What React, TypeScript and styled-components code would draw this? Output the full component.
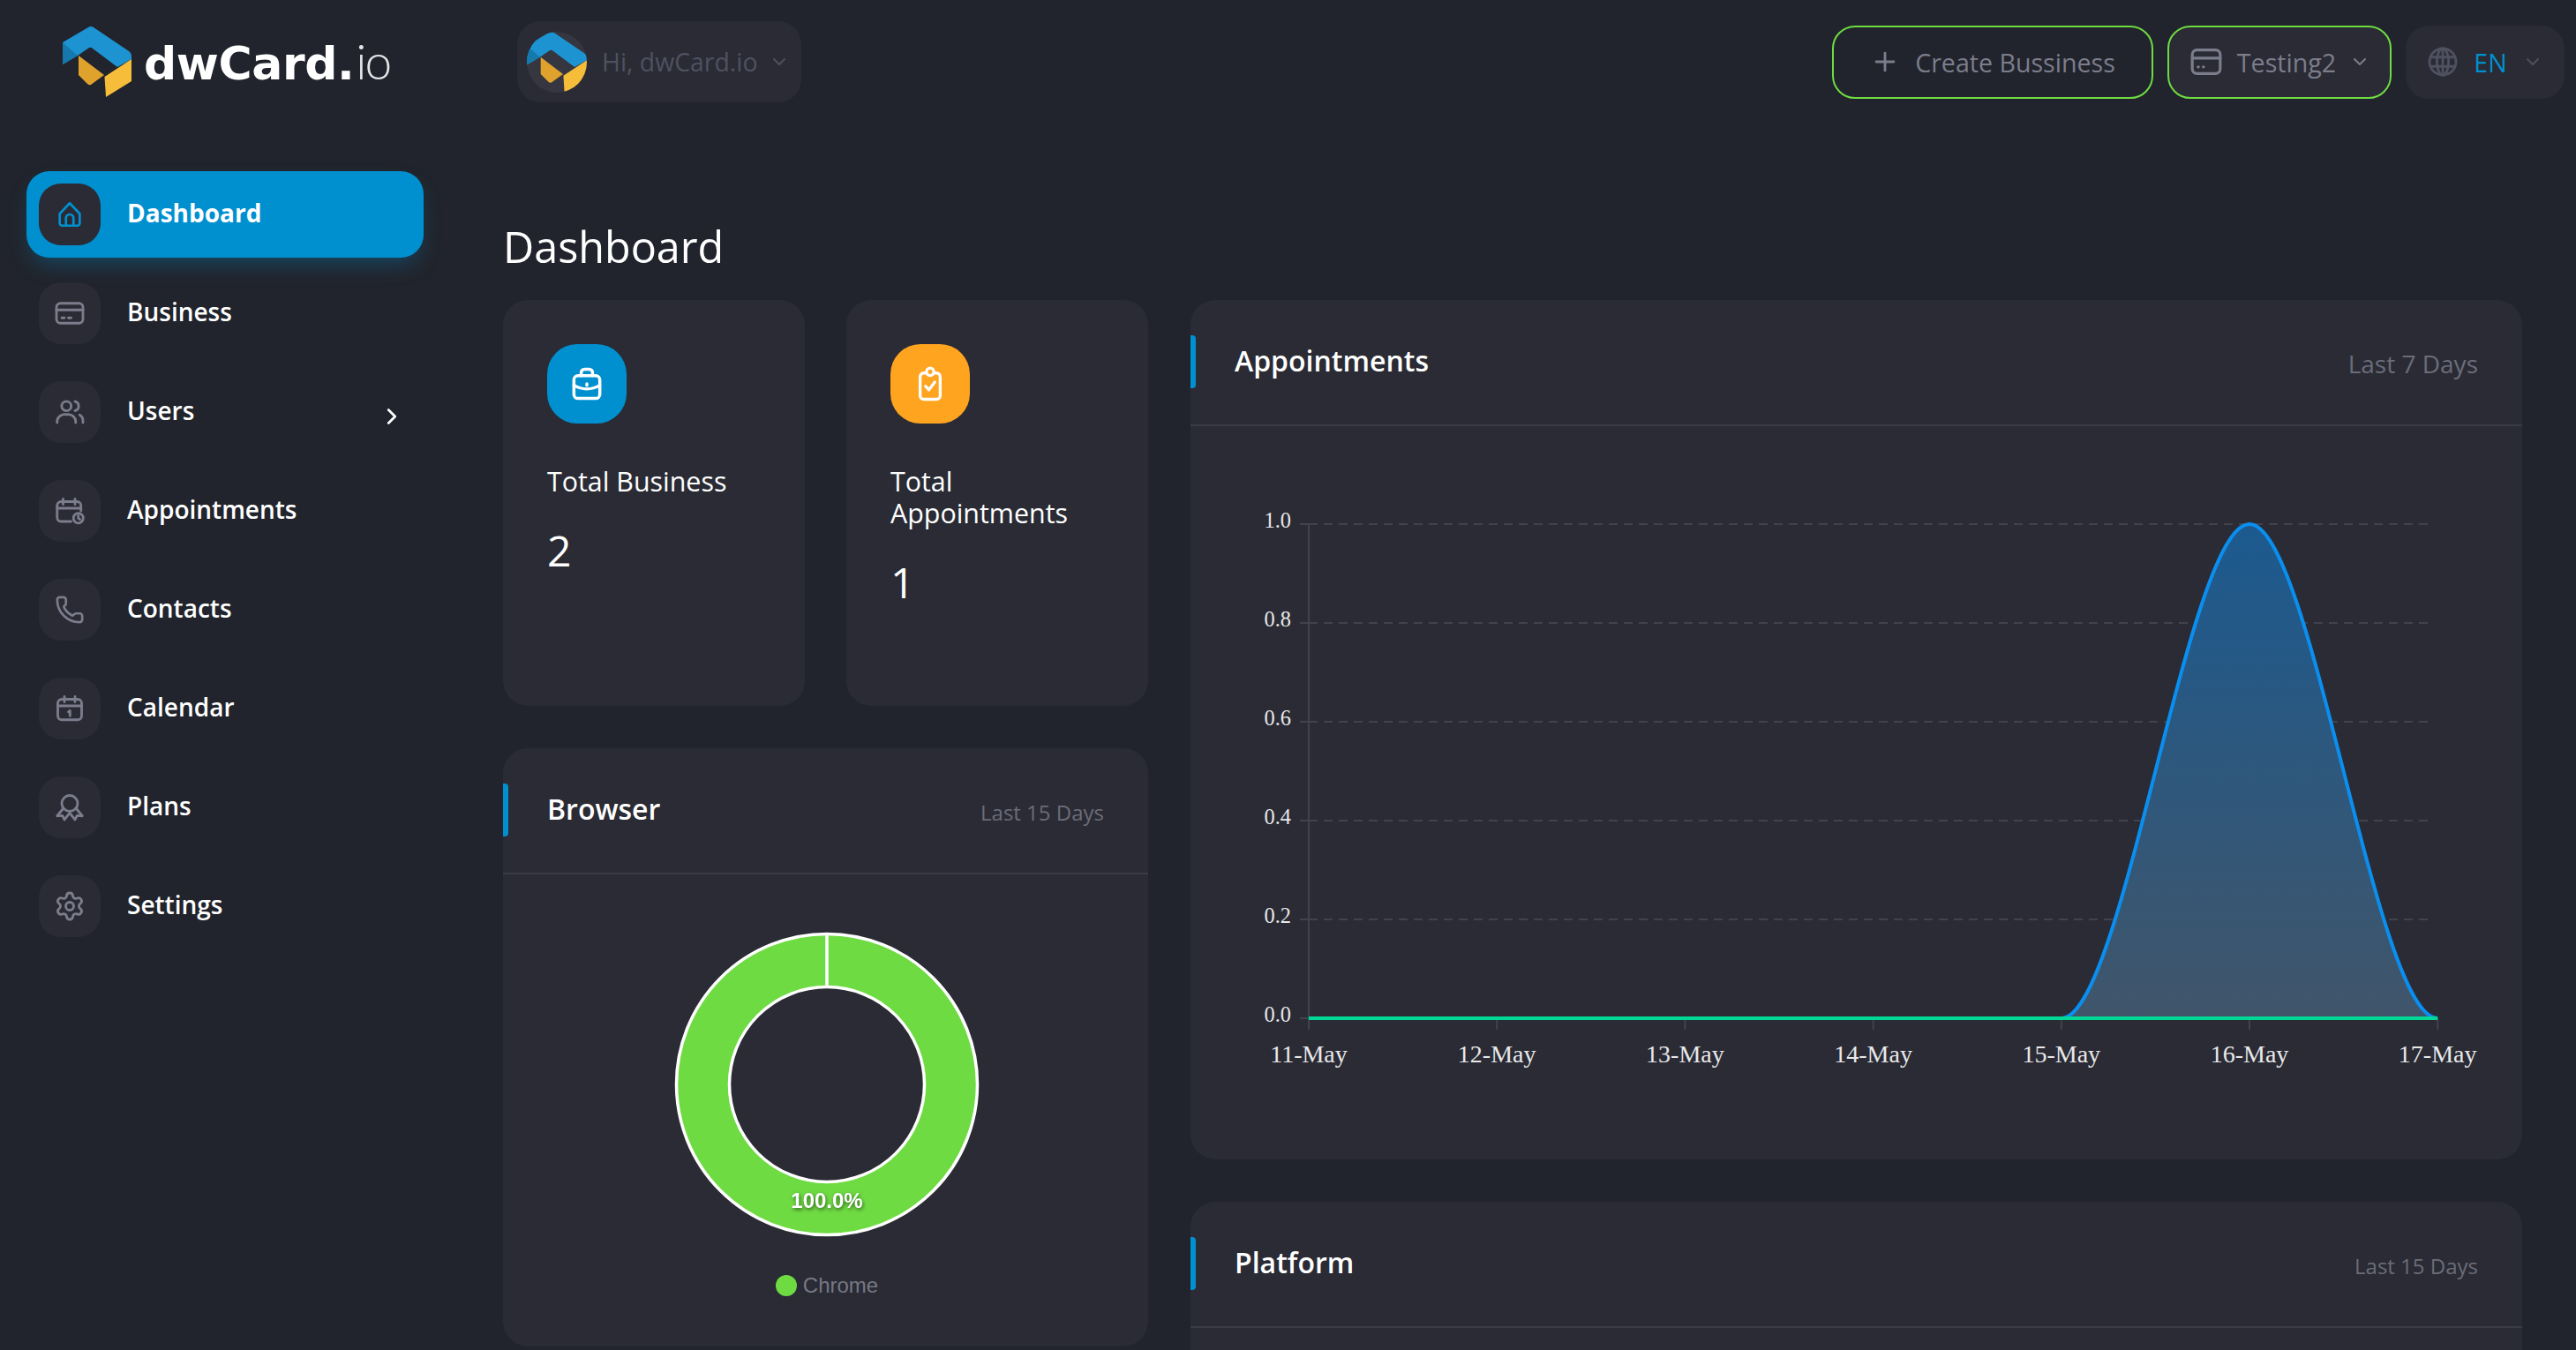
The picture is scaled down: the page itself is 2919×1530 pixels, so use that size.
import React from 'react';
import styled, { createGlobalStyle } from 'styled-components';
import { ChevronDown, ChevronRight, Phone, Plus, Settings } from 'lucide-react';

const GlobalStyle = createGlobalStyle`
    html, body {
        margin: 0;
        height: 100%;
        overflow: hidden;
        background: #21242c;
    }
    body {
        font-family: "Open Sans", "Noto Sans", sans-serif;
        color: #fff;
    }
    * {
        box-sizing: border-box;
    }
`;

const Page = styled.div`
    width: 2919px;
    height: 1530px;
    overflow: hidden;
    background: #21242c;
`;

/* top bar */
const TopBar = styled.header`
    height: 140px;
    display: flex;
    align-items: center;
    padding: 0 13px 0 71px;
`;
const Brand = styled.div`
    width: 515px;
    display: flex;
    align-items: center;
    gap: 14px;
`;
const BrandName = styled.div`
    font-family: "DejaVu Sans", sans-serif;
    font-weight: 700;
    font-size: 52px;
    line-height: 60px;
    letter-spacing: -0.4px;
    color: #fff;
`;
const BrandSuffix = styled.span`
    font-family: "Lato", "Liberation Sans", sans-serif;
    font-weight: 300;
    font-size: 55px;
    letter-spacing: -2px;
    color: #e4e5e8;
    margin-left: 2px;
`;
const ProfilePill = styled.div`
    width: 322px;
    height: 92px;
    border-radius: 26px;
    background: #2a2b34;
    display: flex;
    align-items: center;
    padding-left: 11px;
    gap: 17px;
    color: #4f5160;
    font-size: 28.4px;
`;
const PillChevron = styled.span`
    display: flex;
    margin-left: -5px;
`;
const Avatar = styled.div`
    width: 68px;
    height: 69px;
    border-radius: 50%;
    background: #35363f;
    overflow: hidden;
    flex: none;
`;
const TopActions = styled.div`
    margin-left: auto;
    display: flex;
    align-items: center;
    gap: 16px;
`;
const ActionButton = styled.div<{ $outlined?: boolean; $filled?: boolean; $width: number; $gap?: number }>`
    width: ${(p) => p.$width}px;
    height: 83px;
    border-radius: 26px;
    display: flex;
    align-items: center;
    justify-content: center;
    gap: ${(p) => p.$gap ?? 17}px;
    font-size: 28.6px;
    color: #7c7d8c;
    border: ${(p) => (p.$outlined ? '2.5px solid #6fdb43' : 'none')};
    background: ${(p) => (p.$filled ? '#2a2b34' : 'transparent')};
`;
const LangCode = styled.span`
    color: #0090d0;
`;
const DimSlot = styled.span`
    color: #4f5160;
    display: flex;
`;

/* layout under the bar */
const Content = styled.div`
    display: flex;
    align-items: flex-start;
`;
const Sidebar = styled.nav`
    width: 570px;
    flex: none;
    padding: 54px 0 0 30px;
    display: flex;
    flex-direction: column;
    gap: 14px;
`;
const NavRow = styled.div<{ $active?: boolean }>`
    width: 450px;
    height: 98px;
    display: flex;
    align-items: center;
    gap: 30px;
    padding-left: 14px;
    border-radius: 26px;
    font-size: 28px;
    font-weight: ${(p) => (p.$active ? 700 : 600)};
    color: #fff;
    background: ${(p) => (p.$active ? '#0090d0' : 'transparent')};
    box-shadow: ${(p) => (p.$active ? '0 12px 24px -6px rgba(0, 144, 208, 0.35)' : 'none')};
`;
const NavLabel = styled.span`
    margin-top: -5px;
`;
const NavIcon = styled.span<{ $active?: boolean }>`
    width: 70px;
    height: 70px;
    flex: none;
    border-radius: 25px;
    background: #2a2b34;
    display: flex;
    align-items: center;
    justify-content: center;
    color: ${(p) => (p.$active ? '#0090d0' : '#7c7d8c')};
`;
const NavArrow = styled.span`
    margin-left: auto;
    margin-right: 21px;
    margin-top: 10px;
    display: flex;
`;
const Main = styled.main`
    flex: 1;
    min-width: 0;
    padding-right: 61px;
`;
const PageTitle = styled.h1`
    margin: 106px 0 28px;
    font-size: 48.5px;
    line-height: 66px;
    font-weight: 400;
`;
const Columns = styled.div`
    display: grid;
    grid-template-columns: 731px 1509px;
    column-gap: 48px;
    align-items: start;
`;
const Column = styled.div`
    display: flex;
    flex-direction: column;
    gap: 48px;
`;
const StatRow = styled.div`
    display: grid;
    grid-template-columns: 342px 342px;
    column-gap: 47px;
`;
const Card = styled.section`
    background: #2a2b34;
    border-radius: 28px;
`;
const StatCard = styled(Card)`
    height: 460px;
    padding: 50px 50px 0;
`;
const StatIcon = styled.div<{ $bg: string }>`
    width: 90px;
    height: 90px;
    border-radius: 34px;
    background: ${(p) => p.$bg};
    display: flex;
    align-items: center;
    justify-content: center;
    color: #fff;
`;
const StatLabel = styled.div`
    margin-top: 48px;
    font-size: 30.4px;
    line-height: 36px;
`;
const StatValue = styled.div`
    margin-top: 27px;
    font-size: 48px;
    line-height: 66px;
`;
const PanelHeader = styled.div`
    position: relative;
    display: flex;
    align-items: center;
    justify-content: space-between;
    height: 143px;
    padding: 0 50px;
    border-bottom: 2px solid #3a3b45;
    &::before {
        content: '';
        position: absolute;
        left: 0;
        top: 40px;
        width: 6px;
        height: 60px;
        border-radius: 0 4px 4px 0;
        background: #0090d0;
    }
`;
const PanelTitle = styled.h2`
    margin: 0 0 4px;
    font-size: 32px;
    line-height: 44px;
    font-weight: 600;
`;
const PanelRange = styled.span<{ $size: number; $lift?: number }>`
    font-size: ${(p) => p.$size}px;
    margin-top: ${(p) => p.$lift ?? 4}px;
    color: #6b6c7a;
`;
const BrowserCard = styled(Card)`
    height: 678px;
`;
const BrowserBody = styled.div`
    display: flex;
    flex-direction: column;
    align-items: center;
    padding: 63px 0 0 3px;
`;
const Legend = styled.div`
    margin-top: 39px;
    display: flex;
    align-items: center;
    gap: 7px;
    font-family: "Liberation Sans", Arial, sans-serif;
    font-size: 24px;
    color: #777885;
`;
const LegendDot = styled.i`
    width: 24px;
    height: 24px;
    border-radius: 50%;
    background: #6fdb43;
`;
const AppointmentsCard = styled(Card)`
    height: 974px;
`;
const PlatformCard = styled(Card)`
    height: 500px;
`;
const ChartSvg = styled.svg`
    display: block;
    width: 1509px;
    height: 829px;
`;
const AxisText = styled.text<{ $size: number }>`
    font-family: "Liberation Serif", "Times New Roman", serif;
    font-size: ${(p) => p.$size}px;
    fill: #e8e8ea;
`;
const SliceLabel = styled.text`
    font-family: "Liberation Sans", Arial, sans-serif;
    font-weight: 700;
    font-size: 24px;
    fill: #fff;
    filter: drop-shadow(1px 2px 2px rgba(0, 0, 0, 0.55));
`;

/* drawings */
const Line = styled.svg.attrs({
    viewBox: '0 0 24 24',
    fill: 'none',
    stroke: 'currentColor',
    strokeLinecap: 'round',
    strokeLinejoin: 'round',
})<{ $size?: number }>`
    width: ${(p) => p.$size ?? 36}px;
    height: ${(p) => p.$size ?? 36}px;
    stroke-width: 1.9;
    flex: none;
`;

function LogoMark({ width }: { width: number }) {
    return (
        <svg viewBox="0 0 78 80" width={width} height={(width * 80) / 78} style={{ display: 'block', flex: 'none' }}>
            <path d="M0 18 L29 1 Q32 -1 35 1 L75 28 Q78 30 78 33 L78 37 L62 46 L34 25 Q32 23 30 24 L17 33 L0 43 Z" fill="#1d93d2" />
            <path d="M0 18 L17 33 L0 43 Z" fill="#1579ad" />
            <path d="M18 33 L47 55 L32 66 Q30 67 28 65 L18 55 Z" fill="#dfa32d" />
            <path d="M78 37 L78 62 L49 80 L47.5 57 Z" fill="#f6bd3a" />
        </svg>
    );
}

const HomeIcon = () => (
    <Line $size={34}>
        <path d="M4 11.5 12 3l8 8.5V19a2 2 0 0 1-2 2H6a2 2 0 0 1-2-2z" />
        <path d="M9 21v-6a3 3 0 0 1 6 0v6" />
    </Line>
);
const CardIcon = () => (
    <Line>
        <rect x="2" y="4.5" width="20" height="15" rx="3" />
        <path d="M2 9.5h20" />
        <path d="M6 15.5h2M11 15.5h2" />
    </Line>
);
const UsersIcon = () => (
    <Line>
        <circle cx="9.5" cy="7.5" r="3.6" />
        <path d="M2.5 20v-1.2a5.5 5.5 0 0 1 5.5-5h3a5.5 5.5 0 0 1 5.5 5V20" />
        <path d="M16 4a3.6 3.6 0 0 1 0 7" />
        <path d="M19.5 14.2a5 5 0 0 1 2.5 4.4V20" />
    </Line>
);
const AppointmentIcon = () => (
    <Line>
        <path d="M20.5 12V8a3 3 0 0 0-3-3h-12a3 3 0 0 0-3 3v9a3 3 0 0 0 3 3H13" />
        <path d="M2.5 10h18M7 3v4M16 3v4" />
        <circle cx="18.5" cy="17.5" r="3.7" />
        <path d="M18.5 15.8v1.8l1.2.8" />
    </Line>
);
const CalendarIcon = () => (
    <Line>
        <rect x="3" y="5" width="18" height="15.5" rx="3" />
        <path d="M3 10h18M8 3v4M16 3v4" />
        <path d="M11 14.5l1.2-.8v3.8" />
    </Line>
);
const AwardIcon = () => (
    <Line>
        <circle cx="12" cy="9" r="6" />
        <path d="M7 13 2.5 18.5l4-.2 1.5 3 4-5 4 5 1.5-3 4 .2L17 13" />
    </Line>
);
const WalletIcon = () => (
    <Line $size={40}>
        <rect x="2.5" y="4" width="19" height="16" rx="3.2" />
        <path d="M2.5 9.5h19" />
        <path d="M6.5 15.5h.2M10 15.5h.2" />
    </Line>
);
const GlobeIcon = () => (
    <Line>
        <circle cx="12" cy="12" r="10" />
        <ellipse cx="12" cy="12" rx="4.4" ry="10" />
        <path d="M12 2v20M2.8 8.5h18.4M2.8 15.5h18.4" />
    </Line>
);
const CaseIcon = () => (
    <Line $size={44}>
        <rect x="4" y="7" width="16" height="14" rx="2.5" />
        <path d="M8.5 7V5a2 2 0 0 1 2-2h3a2 2 0 0 1 2 2v2" />
        <path d="M4 13c5 2.8 11 2.8 16 0" />
        <path d="M12 12v1" />
    </Line>
);
const ClipboardIcon = () => (
    <Line $size={42}>
        <rect x="5.5" y="5" width="13" height="17" rx="2.5" />
        <circle cx="12" cy="4.2" r="2.4" fill="#ffa41f" />
        <path d="M9 13.5l2.2 2.4 3.8-5" />
    </Line>
);

/* chart numbers, in the chart's own coordinates */
const AXIS_X = 134;
const STEP_X = 213.2;
const TOP_Y = 111;
const STEP_Y = 112;
const BASE_Y = 671;
const GRID_END = 1408;
const days = ['11-May', '12-May', '13-May', '14-May', '15-May', '16-May', '17-May'];
const levels = ['1.0', '0.8', '0.6', '0.4', '0.2', '0.0'];

function AppointmentsChart() {
    const start = AXIS_X + STEP_X * 4;
    const peak = AXIS_X + STEP_X * 5;
    const end = AXIS_X + STEP_X * 6;
    const bend = 70;
    const curve = `M${start} ${BASE_Y} C${start + bend} ${BASE_Y} ${peak - bend} ${TOP_Y} ${peak} ${TOP_Y} C${peak + bend} ${TOP_Y} ${end - bend} ${BASE_Y} ${end} ${BASE_Y}`;
    return (
        <ChartSvg viewBox="0 0 1509 829">
            <defs>
                <linearGradient id="areaFill" x1="0" y1="0" x2="0" y2="1">
                    <stop offset="0" stopColor="#1c5a8f" />
                    <stop offset="1" stopColor="#40556a" />
                </linearGradient>
            </defs>
            {levels.map((label, i) => (
                <g key={label}>
                    <line x1={AXIS_X - 10} x2={AXIS_X} y1={TOP_Y + STEP_Y * i} y2={TOP_Y + STEP_Y * i} stroke="#41424c" strokeWidth="2" />
                    {i < 5 && (
                        <line x1={AXIS_X} x2={GRID_END} y1={TOP_Y + STEP_Y * i} y2={TOP_Y + STEP_Y * i} stroke="#41424c" strokeWidth="2" strokeDasharray="10 7" />
                    )}
                    <AxisText $size={24.4} x={114} y={TOP_Y + STEP_Y * i + 4} textAnchor="end">{label}</AxisText>
                </g>
            ))}
            <line x1={AXIS_X} x2={AXIS_X} y1={TOP_Y} y2={BASE_Y} stroke="#41424c" strokeWidth="2" />
            {days.map((day, i) => (
                <g key={day}>
                    <line x1={AXIS_X + STEP_X * i} x2={AXIS_X + STEP_X * i} y1={BASE_Y} y2={BASE_Y + 13} stroke="#41424c" strokeWidth="2" />
                    <AxisText $size={28} x={AXIS_X + STEP_X * i} y={721} textAnchor="middle">{day}</AxisText>
                </g>
            ))}
            <path d={`${curve} Z`} fill="url(#areaFill)" />
            <path d={curve} fill="none" stroke="#0a8ff0" strokeWidth="4" />
            <line x1={AXIS_X} x2={end} y1={BASE_Y} y2={BASE_Y} stroke="#00d995" strokeWidth="4" />
        </ChartSvg>
    );
}

function BrowserDonut() {
    return (
        <svg viewBox="0 0 350 350" width="350" height="350">
            <circle cx="175" cy="175" r="140" fill="none" stroke="#6fdb43" strokeWidth="60" />
            <circle cx="175" cy="175" r="170.5" fill="none" stroke="#fff" strokeWidth="3.5" />
            <circle cx="175" cy="175" r="110.5" fill="none" stroke="#fff" strokeWidth="3.5" />
            <line x1="175" x2="175" y1="4" y2="64" stroke="#fff" strokeWidth="3.5" />
            <SliceLabel x="175" y="315" textAnchor="middle">100.0%</SliceLabel>
        </svg>
    );
}

const navItems = [
    { label: 'Business', icon: <CardIcon /> },
    { label: 'Users', icon: <UsersIcon />, arrow: true },
    { label: 'Appointments', icon: <AppointmentIcon /> },
    { label: 'Contacts', icon: <Phone size={34} strokeWidth={1.9} /> },
    { label: 'Calendar', icon: <CalendarIcon /> },
    { label: 'Plans', icon: <AwardIcon /> },
    { label: 'Settings', icon: <Settings size={36} strokeWidth={1.9} /> },
];

export default function App() {
    return (
        <Page>
            <GlobalStyle />
            <TopBar>
                <Brand>
                    <LogoMark width={78} />
                    <BrandName>dwCard.<BrandSuffix>io</BrandSuffix></BrandName>
                </Brand>
                <ProfilePill>
                    <Avatar><LogoMark width={68} /></Avatar>
                    <span>Hi, dwCard.io</span>
                    <PillChevron><ChevronDown size={24} strokeWidth={2} /></PillChevron>
                </ProfilePill>
                <TopActions>
                    <ActionButton $outlined $width={364}>
                        <Plus size={34} strokeWidth={2} />
                        <span>Create Bussiness</span>
                    </ActionButton>
                    <ActionButton $outlined $filled $width={254} $gap={15}>
                        <WalletIcon />
                        <span>Testing2</span>
                        <ChevronDown size={24} strokeWidth={2} />
                    </ActionButton>
                    <ActionButton $filled $width={180}>
                        <DimSlot><GlobeIcon /></DimSlot>
                        <LangCode>EN</LangCode>
                        <DimSlot><ChevronDown size={24} strokeWidth={2} /></DimSlot>
                    </ActionButton>
                </TopActions>
            </TopBar>
            <Content>
                <Sidebar>
                    <NavRow $active>
                        <NavIcon $active><HomeIcon /></NavIcon>
                        <NavLabel>Dashboard</NavLabel>
                    </NavRow>
                    {navItems.map((item) => (
                        <NavRow key={item.label}>
                            <NavIcon>{item.icon}</NavIcon>
                            <NavLabel>{item.label}</NavLabel>
                            {item.arrow && (
                                <NavArrow><ChevronRight size={30} strokeWidth={2.2} /></NavArrow>
                            )}
                        </NavRow>
                    ))}
                </Sidebar>
                <Main>
                    <PageTitle>Dashboard</PageTitle>
                    <Columns>
                        <Column>
                            <StatRow>
                                <StatCard>
                                    <StatIcon $bg="#0090d0"><CaseIcon /></StatIcon>
                                    <StatLabel>Total Business</StatLabel>
                                    <StatValue>2</StatValue>
                                </StatCard>
                                <StatCard>
                                    <StatIcon $bg="#ffa41f"><ClipboardIcon /></StatIcon>
                                    <StatLabel>Total Appointments</StatLabel>
                                    <StatValue>1</StatValue>
                                </StatCard>
                            </StatRow>
                            <BrowserCard>
                                <PanelHeader>
                                    <PanelTitle>Browser</PanelTitle>
                                    <PanelRange $size={24}>Last 15 Days</PanelRange>
                                </PanelHeader>
                                <BrowserBody>
                                    <BrowserDonut />
                                    <Legend><LegendDot />Chrome</Legend>
                                </BrowserBody>
                            </BrowserCard>
                        </Column>
                        <Column>
                            <AppointmentsCard>
                                <PanelHeader>
                                    <PanelTitle>Appointments</PanelTitle>
                                    <PanelRange $size={28} $lift={2}>Last 7 Days</PanelRange>
                                </PanelHeader>
                                <AppointmentsChart />
                            </AppointmentsCard>
                            <PlatformCard>
                                <PanelHeader>
                                    <PanelTitle>Platform</PanelTitle>
                                    <PanelRange $size={24}>Last 15 Days</PanelRange>
                                </PanelHeader>
                            </PlatformCard>
                        </Column>
                    </Columns>
                </Main>
            </Content>
        </Page>
    );
}
